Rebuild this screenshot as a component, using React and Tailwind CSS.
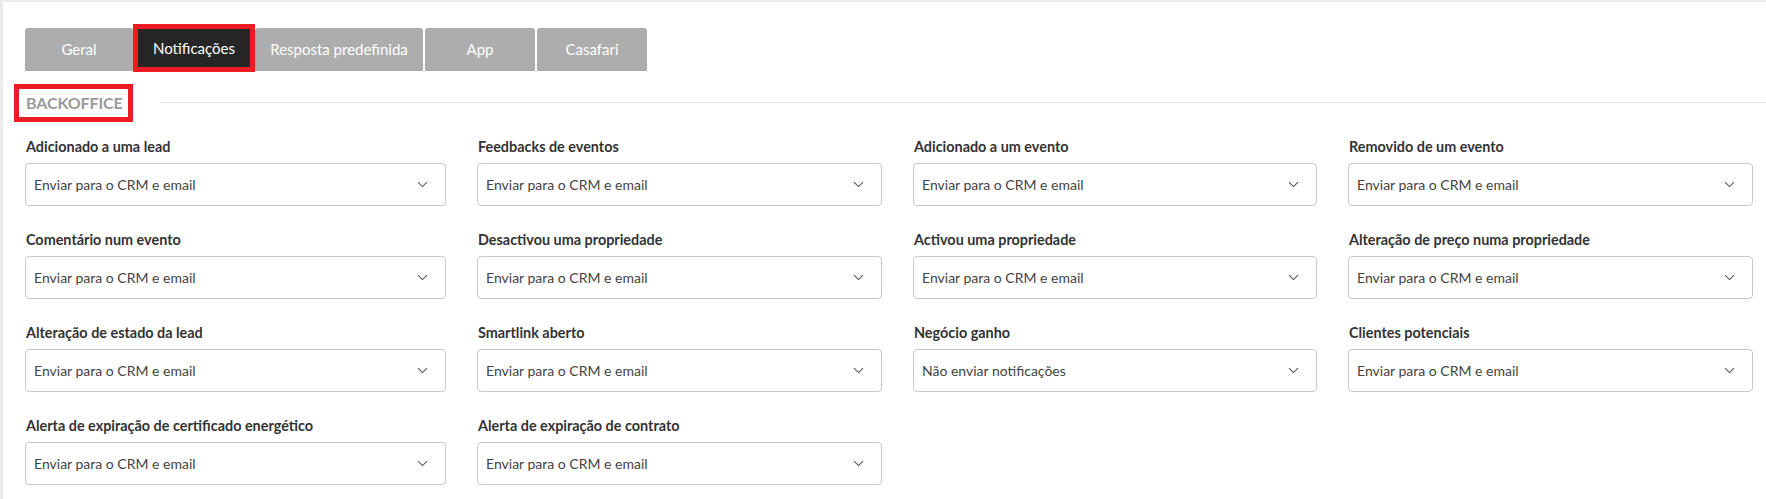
import { useState } from 'react';

const fields = [
  ['Adicionado a uma lead', 'Enviar para o CRM e email'],
  ['Feedbacks de eventos', 'Enviar para o CRM e email'],
  ['Adicionado a um evento', 'Enviar para o CRM e email'],
  ['Removido de um evento', 'Enviar para o CRM e email'],
  ['Comentário num evento', 'Enviar para o CRM e email'],
  ['Desactivou uma propriedade', 'Enviar para o CRM e email'],
  ['Activou uma propriedade', 'Enviar para o CRM e email'],
  ['Alteração de preço numa propriedade', 'Enviar para o CRM e email'],
  ['Alteração de estado da lead', 'Enviar para o CRM e email'],
  ['Smartlink aberto', 'Enviar para o CRM e email'],
  ['Negócio ganho', 'Não enviar notificações'],
  ['Clientes potenciais', 'Enviar para o CRM e email'],
  ['Alerta de expiração de certificado energético', 'Enviar para o CRM e email'],
  ['Alerta de expiração de contrato', 'Enviar para o CRM e email'],
];

function Chevron() {
  return (
    <svg width="11" height="7" viewBox="0 0 11 7" fill="none" className="shrink-0">
      <path d="M1 1.2 L5.5 5.6 L10 1.2" stroke="#555" strokeWidth="1.1" />
    </svg>
  );
}

function Field({ label, value }) {
  return (
    <div>
      <div className="text-[14.4px] leading-[20px] font-bold text-[#333] mb-[6px] pl-[1px] whitespace-nowrap">{label}</div>
      <div className="h-[43px] border border-[#c8c8c8] rounded-[4px] flex items-center justify-between pl-[8px] pr-[17px] bg-white">
        <span className="text-[14px] text-[#444]">{value}</span>
        <Chevron />
      </div>
    </div>
  );
}

export default function App() {
  const [tab] = useState('Notificações');
  const tabs = [
    { name: 'Geral', w: 'w-[108px]' },
    { name: 'Notificações', w: 'w-[122px]' },
    { name: 'Resposta predefinida', w: 'w-[168px] mr-[2px]' },
    { name: 'App', w: 'w-[110px] mr-[2px]' },
    { name: 'Casafari', w: 'w-[110px]' },
  ];

  return (
    <div className="w-[1766px] h-[499px] bg-[#ebebeb] pt-[2px] pl-[3px] overflow-hidden" style={{ fontFamily: 'Lato, "Open Sans", sans-serif' }}>
      <div className="bg-white h-full pl-[22px] pr-[14px]">
        {/* Tabs */}
        <div className="flex items-end pt-[21px] h-[69px]">
          {tabs.map((t) =>
            t.name === tab ? (
              <div key={t.name} className={`${t.w} h-[48px] border-[5px] border-[#ed1c24] bg-[#262626] flex items-center justify-center text-[15px] text-white -mb-[1px]`}>
                {t.name}
              </div>
            ) : (
              <div key={t.name} className={`${t.w} h-[43px] bg-[#adadad] rounded-t-[3px] flex items-center justify-center text-[15px] text-white`}>
                {t.name}
              </div>
            )
          )}
        </div>

        {/* Section header */}
        <div className="flex items-center mt-[13px] -ml-[11px]">
          <div className="border-[5px] border-[#ed1c24] h-[38px] w-[119px] flex items-center pl-[7px]">
            <span className="text-[16px] font-bold text-[#9a9a9a] tracking-[-0.1px]">BACKOFFICE</span>
          </div>
          <div className="flex-1 h-px bg-[#e6e6e6] ml-[27px] -mr-[14px] -mt-[2px]"></div>
        </div>

        {/* Fields */}
        <div className="grid grid-cols-[421px_405px_404px_405px] gap-x-[31px] gap-y-[24px] mt-[15px]">
          {fields.map(([l, v]) => (
            <Field key={l} label={l} value={v} />
          ))}
        </div>
      </div>
    </div>
  );
}
